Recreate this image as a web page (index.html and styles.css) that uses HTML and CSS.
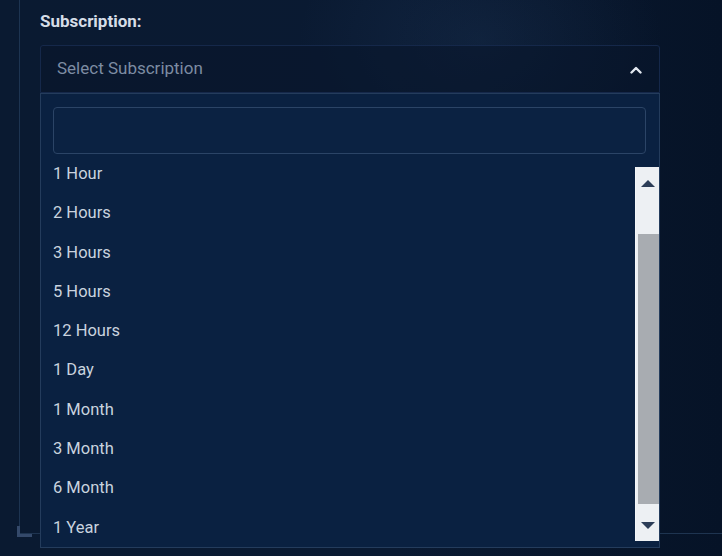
FILE: index.html
```html
<!DOCTYPE html>
<html lang="en">
<head>
  <meta charset="UTF-8">
  <meta name="viewport" content="width=device-width, initial-scale=1.0">
  <title>Subscription</title>
  <link rel="stylesheet" href="styles.css">
</head>
<body>
  <div class="panel">
    <span class="panel-corner"></span>
    <div class="form-group">
      <label class="field-label">Subscription:</label>
      <div class="select is-open">
        <div class="select-control">
          <span class="select-placeholder">Select Subscription</span>
          <svg class="select-chevron" width="12" height="8" viewBox="0 0 12 8">
            <path d="M1.5 6.5 L6 2 L10.5 6.5" fill="none" stroke="#e2e8f0" stroke-width="2.4" stroke-linecap="round" stroke-linejoin="round"/>
          </svg>
        </div>
        <div class="select-menu">
          <div class="menu-search">
            <input type="text" class="search-input">
          </div>
          <div class="menu-body">
            <ul class="menu-list">
              <li>1 Hour</li>
              <li>2 Hours</li>
              <li>3 Hours</li>
              <li>5 Hours</li>
              <li>12 Hours</li>
              <li>1 Day</li>
              <li>1 Month</li>
              <li>3 Month</li>
              <li>6 Month</li>
              <li>1 Year</li>
            </ul>
            <div class="scrollbar">
              <div class="sb-button"><span class="sb-arrow up"></span></div>
              <div class="sb-track"><div class="sb-thumb"></div></div>
              <div class="sb-button"><span class="sb-arrow down"></span></div>
            </div>
          </div>
        </div>
      </div>
    </div>
  </div>
</body>
</html>
```

FILE: styles.css
```css
html, body {
  margin: 0;
  height: 100%;
}
body {
  font-family: Roboto, 'Liberation Sans', Arial, sans-serif;
  background-color: #081830;
  background-image:
    radial-gradient(ellipse 260px 180px at 480px 40px, rgba(40, 70, 110, 0.22), transparent 70%),
    linear-gradient(90deg, #0a1a31 0%, #0a1a32 55%, #061327 100%);
  overflow: hidden;
  color: #cbd4df;
}
.panel {
  position: relative;
  margin-left: 19px;
  height: 534px;
  box-sizing: border-box;
  border-left: 1px solid #1d3451;
  border-bottom: 1px solid #1e3450;
  padding: 10px 0 0 20px;
}
.panel-corner {
  position: absolute;
  left: -3px;
  bottom: -4px;
  width: 12px;
  height: 8px;
  border-left: 3px solid #34496a;
  border-bottom: 3px solid #34496a;
}
.field-label {
  display: block;
  font-size: 17px;
  font-weight: 700;
  line-height: 22px;
  color: #d6dde7;
  margin-bottom: 13px;
}
.select {
  position: relative;
  width: 620px;
}
.select-control {
  display: flex;
  align-items: center;
  justify-content: space-between;
  height: 48px;
  box-sizing: border-box;
  padding: 0 17px 0 16px;
  border: 1px solid #15284a;
  border-radius: 3px 3px 0 0;
  background-color: rgba(8, 22, 44, 0.6);
}
.select-placeholder {
  font-size: 17px;
  color: #7d8ca3;
  margin-top: -2px;
}
.select-chevron {
  margin-top: 1px;
}
.select-menu {
  position: absolute;
  top: 48px;
  left: 0;
  width: 620px;
  height: 455px;
  box-sizing: border-box;
  border: 1px solid #243c5c;
  background-color: #0a2141;
  display: flex;
  flex-direction: column;
}
.menu-search {
  padding: 13px 13px 0 12px;
}
.search-input {
  display: block;
  width: 100%;
  height: 47px;
  box-sizing: border-box;
  border: 1px solid #2b4466;
  border-radius: 4px;
  background-color: #0b2242;
  outline: none;
}
.menu-body {
  flex: 1;
  display: flex;
  padding-left: 12px;
}
.menu-list {
  flex: 1;
  list-style: none;
  margin: 0;
  padding: 0;
}
.menu-list li {
  height: 39.3px;
  line-height: 39.3px;
  font-size: 16.5px;
  color: #c9d3df;
}
.scrollbar {
  width: 24px;
  margin: 13px 0 6px;
  display: flex;
  flex-direction: column;
  box-sizing: border-box;
  border-left: 1px solid #f4f6f8;
  background-color: #edf0f3;
}
.sb-button {
  height: 33px;
  display: flex;
  align-items: center;
  justify-content: center;
}
.sb-track {
  flex: 1;
  display: flex;
  flex-direction: column;
  padding: 34px 0 4px 2px;
}
.sb-thumb {
  flex: 1;
  background-color: #a8acb1;
}
.sb-arrow {
  width: 0;
  height: 0;
  border-left: 7px solid transparent;
  border-right: 7px solid transparent;
}
.sb-arrow.up {
  border-bottom: 7px solid #2c3d57;
  margin-top: -1px;
}
.sb-arrow.down {
  border-top: 7px solid #2c3d57;
  margin-top: 2px;
}
```
